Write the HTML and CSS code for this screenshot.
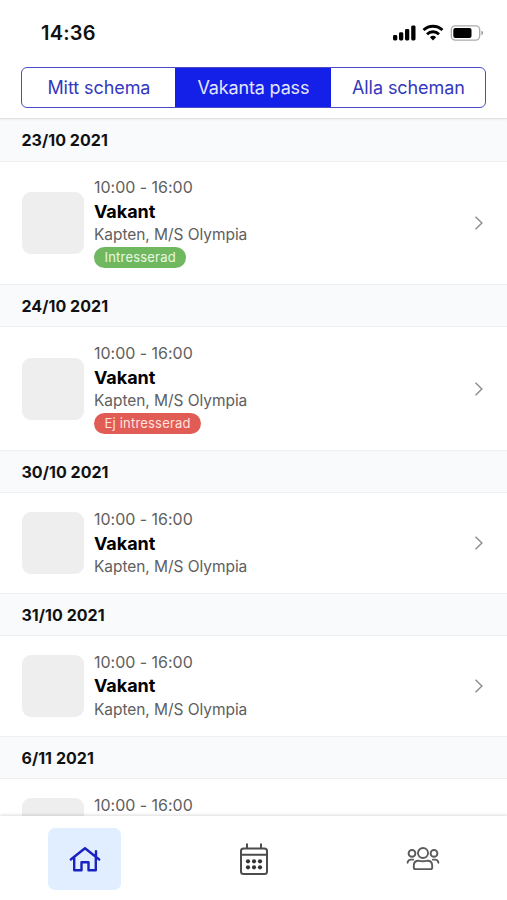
FILE: index.html
```html
<!DOCTYPE html>
<html lang="sv">
<head>
<meta charset="utf-8">
<title>Vakanta pass</title>
<link rel="stylesheet" href="styles.css">
</head>
<body>
<svg class="defs" width="0" height="0" aria-hidden="true">
  <symbol id="chevron" viewBox="0 0 10 14"><path d="M1.500 .8l6.400 6.200-6.400 6.200" fill="none" stroke="#8c8c8c" stroke-width="1.400"/></symbol>
</svg>
<div class="app">
  <header class="top">
    <div class="status">
      <span class="clock">14:36</span>
      <svg class="signals" width="92" height="18" viewBox="0 0 92 18">
        <rect x="1" y="11" width="4.300" height="5.500" rx="1.400"/>
        <rect x="7" y="8.300" width="4.300" height="8.200" rx="1.400"/>
        <rect x="13" y="5" width="4.300" height="11.500" rx="1.400"/>
        <rect x="19.200" y="1.400" width="4.300" height="15.100" rx="1.400"/>
        <g fill="none" stroke="#000" stroke-width="2.800">
          <path d="M31.500 6.100a13.600 13.600 0 0 1 19 0"/>
          <path d="M35 10.200a8.600 8.600 0 0 1 12 0"/>
        </g>
        <path d="M37.900 13.200a4.500 4.500 0 0 1 6.200 0L41 16.500z"/>
        <rect x="59.300" y="1.900" width="28.400" height="14.200" rx="4" fill="none" stroke="#aaa" stroke-width="1.300"/>
        <rect x="61.300" y="4" width="18.200" height="10" rx="2"/>
        <path d="M89.400 6.800q1.800.6 1.800 2.200t-1.800 2.200z" fill="#999"/>
      </svg>
    </div>
    <nav class="tabs">
      <a class="tab">Mitt schema</a>
      <a class="tab active">Vakanta pass</a>
      <a class="tab">Alla scheman</a>
    </nav>
  </header>
  <main class="list">
    <h2 class="date">23/10 2021</h2>
    <article class="shift">
      <div class="thumb"></div>
      <div class="info"><p class="time">10:00 - 16:00</p><h3>Vakant</h3><p class="role">Kapten, M/S Olympia</p><span class="badge yes">Intresserad</span></div>
      <svg class="chevron" width="10" height="14"><use href="#chevron"/></svg>
    </article>
    <h2 class="date">24/10 2021</h2>
    <article class="shift">
      <div class="thumb"></div>
      <div class="info"><p class="time">10:00 - 16:00</p><h3>Vakant</h3><p class="role">Kapten, M/S Olympia</p><span class="badge no">Ej intresserad</span></div>
      <svg class="chevron" width="10" height="14"><use href="#chevron"/></svg>
    </article>
    <h2 class="date">30/10 2021</h2>
    <article class="shift">
      <div class="thumb"></div>
      <div class="info"><p class="time">10:00 - 16:00</p><h3>Vakant</h3><p class="role">Kapten, M/S Olympia</p></div>
      <svg class="chevron" width="10" height="14"><use href="#chevron"/></svg>
    </article>
    <h2 class="date">31/10 2021</h2>
    <article class="shift">
      <div class="thumb"></div>
      <div class="info"><p class="time">10:00 - 16:00</p><h3>Vakant</h3><p class="role">Kapten, M/S Olympia</p></div>
      <svg class="chevron" width="10" height="14"><use href="#chevron"/></svg>
    </article>
    <h2 class="date">6/11 2021</h2>
    <article class="shift">
      <div class="thumb"></div>
      <div class="info"><p class="time">10:00 - 16:00</p></div>
    </article>
  </main>
  <nav class="bottom">
    <a class="item current">
      <svg width="32" height="28" viewBox="0 0 32 28" fill="none" stroke="#1a22c0" stroke-width="2.400" stroke-linecap="round" stroke-linejoin="round">
        <path d="M1.800 14.500L16 3.200l14.200 11.300M27 11.500V6.200M5.200 12.500v12.800h7.300v-8h7v8h7.300V12.500"/>
      </svg>
    </a>
    <a class="item">
      <svg width="30" height="34" viewBox="0 0 30 34" fill="none" stroke="#4c4c4c" stroke-width="2">
        <rect x="2" y="6.500" width="26" height="25.500" rx="2.500"/>
        <path d="M2 12.700h26M8 1.500v5M22 1.500v5"/>
        <g fill="#333" stroke="none"><circle cx="9" cy="19.300" r="2.100"/><circle cx="15" cy="19.300" r="2.100"/><circle cx="21" cy="19.300" r="2.100"/><circle cx="9" cy="25.300" r="2.100"/><circle cx="15" cy="25.300" r="2.100"/><circle cx="21" cy="25.300" r="2.100"/></g>
      </svg>
    </a>
    <a class="item">
      <svg width="34" height="26" viewBox="0 0 34 26" fill="none" stroke="#5c5c5c" stroke-width="1.900" stroke-linecap="round" stroke-linejoin="round">
        <circle cx="17" cy="7" r="5"/><circle cx="6" cy="7.400" r="3.400"/><circle cx="28" cy="7.400" r="3.400"/>
        <path d="M12.500 14.700q4.500 1.200 9 0c3 0 4.700 2.200 4.700 5v1.800q0 1.600-1.600 1.600H9.400q-1.600 0-1.600-1.600v-1.800c0-2.800 1.700-5 4.700-5zM1.600 16.700q.4-3.100 3.400-3.100h2.200M32.400 16.700q-.4-3.100-3.400-3.100h-2.200"/>
      </svg>
    </a>
  </nav>
</div>
</body>
</html>
```

FILE: styles.css
```css
* { box-sizing: border-box; }
body, h2, h3, p { margin: 0; }
body { background: #fff; font-family: Inter, "Liberation Sans", sans-serif; }
.defs { display: block; }
.app { display: flex; flex-direction: column; width: 507px; height: 900px; overflow: hidden; background: #fff; }

.top { flex: none; height: 118px; position: relative; z-index: 1; background: #fff; box-shadow: 0 1px 3px rgba(0, 0, 0, .1); }
.status { display: flex; justify-content: space-between; align-items: center; height: 66px; margin-bottom: 1px; padding: 0 23px 0 41px; }
.clock { font-size: 20px; font-weight: 600; line-height: 24px; letter-spacing: .2px; color: #111; }
.signals { display: block; }
.tabs { display: grid; grid-template-columns: 153px 156px 1fr; height: 41px; margin: 0 20.600px 0 21.400px; border: 1.500px solid #4a4dc8; border-radius: 6px; overflow: hidden; }
.tab { display: flex; align-items: center; justify-content: center; font-size: 18px; letter-spacing: -.08px; color: #3538bd; }
.tab.active { background: #1420e8; color: #e4e6ff; letter-spacing: -.16px; }

.list { flex: 1; min-height: 0; overflow: hidden; }
.date { height: 43.500px; padding-left: 21.500px; background: #f8fafc; border-top: 1px solid #eeeff0; border-bottom: 1px solid #eeeff0; font-size: 16px; font-weight: 700; line-height: 42px; letter-spacing: .04px; color: #111; }
.shift { display: flex; align-items: center; min-height: 99.300px; padding: 14px 23.500px 14px 21.500px; }
.thumb { flex: none; width: 62px; height: 62px; border-radius: 9px; background: #eee; }
.info { flex: 1; margin-left: 10.500px; padding-top: .6px; align-self: flex-start; }
.info p { font-size: 16px; line-height: 23.600px; color: #606060; }
.info .time { letter-spacing: -.02px; }
.info .role { font-size: 15.500px; letter-spacing: -.06px; }
.info h3 { font-size: 18px; font-weight: 700; line-height: 23.400px; letter-spacing: -.04px; color: #000; }
.badge { display: block; width: fit-content; height: 21px; margin: .7px 0 1.600px; padding: 0 10.500px; border-radius: 11px; font-size: 13px; line-height: 21px; letter-spacing: .2px; }
.yes { background: #70b860; color: #e9f8e4; }
.no { background: #e25c56; color: #ffe2df; }

.bottom { flex: none; position: relative; display: grid; grid-template-columns: repeat(3, 1fr); height: 84px; padding-top: 12px; background: #fff; box-shadow: 0 -1px 3px rgba(0, 0, 0, .14); }
.item { display: flex; align-items: center; justify-content: center; justify-self: center; width: 73px; height: 62px; border-radius: 7px; }
.current { background: #e0eeff; }
```
